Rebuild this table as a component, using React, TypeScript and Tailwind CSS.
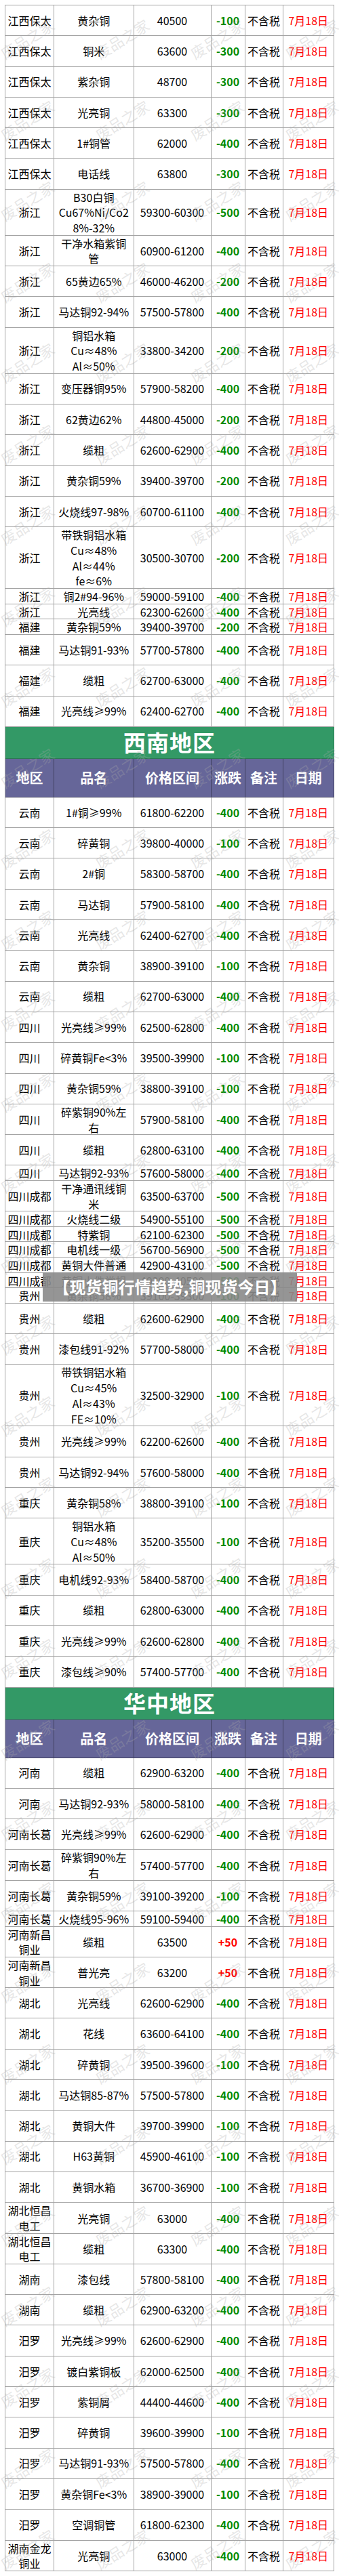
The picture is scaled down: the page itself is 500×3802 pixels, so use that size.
import React from "react"

type Row =
    | { kind: "title"; text: string }
    | { kind: "head" }
    | { kind: "row"; region: string; product: string; price: string; change: string; h: "n" | "c" | "t" | "f"; banner?: boolean }

const r = (region: string, product: string, price: string, change: string, h: "n" | "c" | "t" | "f" = "n", banner = false): Row => ({
    kind: "row", region, product, price, change, h, banner,
})

const rows: Row[] = [
    r("江西保太", "黄杂铜", "40500", "-100"),
    r("江西保太", "铜米", "63600", "-300"),
    r("江西保太", "紫杂铜", "48700", "-300"),
    r("江西保太", "光亮铜", "63300", "-300"),
    r("江西保太", "1#铜管", "62000", "-400"),
    r("江西保太", "电话线", "63800", "-300"),
    r("浙江", "B30白铜\nCu67%Ni/Co2\n8%-32%", "59300-60300", "-500", "t"),
    r("浙江", "干净水箱紫铜\n管", "60900-61200", "-400"),
    r("浙江", "65黄边65%", "46000-46200", "-200"),
    r("浙江", "马达铜92-94%", "57500-57800", "-400"),
    r("浙江", "铜铝水箱\nCu≈48%\nAl≈50%", "33800-34200", "-200", "t"),
    r("浙江", "变压器铜95%", "57900-58200", "-400"),
    r("浙江", "62黄边62%", "44800-45000", "-200"),
    r("浙江", "缆粗", "62600-62900", "-400"),
    r("浙江", "黄杂铜59%", "39400-39700", "-200"),
    r("浙江", "火烧线97-98%", "60700-61100", "-400"),
    r("浙江", "带铁铜铝水箱\nCu≈48%\nAl≈44%\nfe≈6%", "30500-30700", "-200", "f"),
    r("浙江", "铜2#94-96%", "59000-59100", "-400", "c"),
    r("浙江", "光亮线", "62300-62600", "-400", "c"),
    r("福建", "黄杂铜59%", "39400-39700", "-200", "c"),
    r("福建", "马达铜91-93%", "57700-57800", "-400"),
    r("福建", "缆粗", "62700-63000", "-400"),
    r("福建", "光亮线≥99%", "62400-62700", "-400"),
    { kind: "title", text: "西南地区" },
    { kind: "head" },
    r("云南", "1#铜≥99%", "61800-62200", "-400"),
    r("云南", "碎黄铜", "39800-40000", "-100"),
    r("云南", "2#铜", "58300-58700", "-400"),
    r("云南", "马达铜", "57900-58100", "-400"),
    r("云南", "光亮线", "62400-62700", "-400"),
    r("云南", "黄杂铜", "38900-39100", "-100"),
    r("云南", "缆粗", "62700-63000", "-400"),
    r("四川", "光亮线≥99%", "62500-62800", "-400"),
    r("四川", "碎黄铜Fe<3%", "39500-39900", "-100"),
    r("四川", "黄杂铜59%", "38800-39100", "-100"),
    r("四川", "碎紫铜90%左\n右", "57900-58100", "-400"),
    r("四川", "缆粗", "62800-63100", "-400"),
    r("四川", "马达铜92-93%", "57600-58000", "-400", "c"),
    r("四川成都", "干净通讯线铜\n米", "63500-63700", "-500"),
    r("四川成都", "火烧线二级", "54900-55100", "-500", "c"),
    r("四川成都", "特紫铜", "62100-62300", "-500", "c"),
    r("四川成都", "电机线一级", "56700-56900", "-500", "c"),
    r("四川成都", "黄铜大件普通", "42900-43100", "-500", "c"),
    r("四川成都", "黄铜小件常规", "40300-40500", "-500", "c", true),
    r("贵州", "黄杂铜58%", "39100-39300", "-100", "c"),
    r("贵州", "缆粗", "62600-62900", "-400"),
    r("贵州", "漆包线91-92%", "57700-58000", "-400"),
    r("贵州", "带铁铜铝水箱\nCu≈45%\nAl≈43%\nFE≈10%", "32500-32900", "-100", "f"),
    r("贵州", "光亮线≥99%", "62200-62600", "-400"),
    r("贵州", "马达铜92-94%", "57600-58000", "-400"),
    r("重庆", "黄杂铜58%", "38800-39100", "-100"),
    r("重庆", "铜铝水箱\nCu≈48%\nAl≈50%", "35200-35500", "-100", "t"),
    r("重庆", "电机线92-93%", "58400-58700", "-400"),
    r("重庆", "缆粗", "62800-63000", "-400"),
    r("重庆", "光亮线≥99%", "62600-62800", "-400"),
    r("重庆", "漆包线≥90%", "57400-57700", "-400"),
    { kind: "title", text: "华中地区" },
    { kind: "head" },
    r("河南", "缆粗", "62900-63200", "-400"),
    r("河南", "马达铜92-93%", "58000-58100", "-400"),
    r("河南长葛", "光亮线≥99%", "62600-62900", "-400"),
    r("河南长葛", "碎紫铜90%左\n右", "57400-57700", "-400"),
    r("河南长葛", "黄杂铜59%", "39100-39200", "-100"),
    r("河南长葛", "火烧线95-96%", "59100-59400", "-400", "c"),
    r("河南新昌\n铜业", "缆粗", "63500", "+50"),
    r("河南新昌\n铜业", "普光亮", "63200", "+50"),
    r("湖北", "光亮线", "62600-62900", "-400"),
    r("湖北", "花线", "63600-64100", "-400"),
    r("湖北", "碎黄铜", "39500-39600", "-100"),
    r("湖北", "马达铜85-87%", "57500-57800", "-400"),
    r("湖北", "黄铜大件", "39700-39900", "-100"),
    r("湖北", "H63黄铜", "45900-46100", "-100"),
    r("湖北", "黄铜水箱", "36700-36900", "-100"),
    r("湖北恒昌\n电工", "光亮铜", "63000", "-400"),
    r("湖北恒昌\n电工", "缆粗", "63300", "-400"),
    r("湖南", "漆包线", "57800-58100", "-400"),
    r("湖南", "缆粗", "62900-63200", "-400"),
    r("汨罗", "光亮线≥99%", "62600-62900", "-400"),
    r("汨罗", "镀白紫铜板", "62000-62500", "-400"),
    r("汨罗", "紫铜屑", "44400-44600", "-400"),
    r("汨罗", "碎黄铜", "39600-39900", "-100"),
    r("汨罗", "马达铜91-93%", "57500-57800", "-400"),
    r("汨罗", "黄杂铜Fe<3%", "38900-39000", "-100"),
    r("汨罗", "空调铜管", "61800-62300", "-400"),
    r("湖南金龙\n铜业", "光亮铜", "63000", "-400"),
]

const heights = {
    n: "h-[45.3px]",
    c: "h-[22.6px]",
    t: "h-[68px]",
    f: "h-[91px]",
}

const grid = "grid grid-cols-[72px_117.5px_114px_50px_56px_75.5px] border-b border-[#a3a3a3]"
const cell = "flex items-center justify-center text-center border-r border-[#a3a3a3] whitespace-pre-line leading-[22.7px]"

function DataRow({ row }: { row: Extract<Row, { kind: "row" }> }) {
    const up = row.change.startsWith("+")
    return (
        <div className={`${grid} ${heights[row.h]} relative`}>
            <div className={cell}>{row.region}</div>
            <div className={`${cell} whitespace-pre`}>{row.product}</div>
            <div className={cell}>{row.price}</div>
            <div className={`${cell} font-bold ${up ? "text-[#ff0000]" : "text-[#008a00]"}`}>{row.change}</div>
            <div className={cell}>不含税</div>
            <div className={`${cell} text-[#ff0000]`}>7月18日</div>
            {row.banner && (
                <div className="absolute left-[55px] top-[-1px] w-[375px] h-[43px] bg-[#8a8a8a]/90 flex items-center justify-center text-white font-bold text-[24px] whitespace-nowrap z-20">
                    【现货铜行情趋势,铜现货今日】
                </div>
            )}
        </div>
    )
}

function HeadRow() {
    const h = "flex items-center justify-center border-r border-[#3f3f5f] text-white font-bold text-[20px]"
    return (
        <div className="grid grid-cols-[72px_117.5px_114px_50px_56px_75.5px] h-[57px] bg-[#666699] border-b border-[#3f3f5f]">
            <div className={h}>地区</div>
            <div className={h}>品名</div>
            <div className={h}>价格区间</div>
            <div className={h}>涨跌</div>
            <div className={h}>备注</div>
            <div className={h}>日期</div>
        </div>
    )
}

function TitleRow({ text }: { text: string }) {
    return (
        <div className="h-[47px] bg-[#339966] border-r border-b border-[#2a7a52] flex items-center justify-center text-white font-bold text-[33px] tracking-[1px]">
            {text}
        </div>
    )
}

// faint diagonal watermark, repeated
const marks: { x: number; y: number }[] = []
for (let j = 0; j < 32; j++) {
    for (let i = 0; i < 4; i++) {
        marks.push({ x: 40 + i * 140, y: 57 + j * 119.5 })
    }
}

export default function App() {
    return (
        <div className="relative w-[500px] h-[3802px] bg-white pt-[7px] pl-[7px] overflow-hidden font-['Noto_Sans_CJK_SC','Noto_Sans',sans-serif] text-[16px] text-black">
            <div className="w-[486px] border-l border-t border-[#a3a3a3]">
                {rows.map((row, i) =>
                    row.kind === "title" ? (
                        <TitleRow key={i} text={row.text} />
                    ) : row.kind === "head" ? (
                        <HeadRow key={i} />
                    ) : (
                        <DataRow key={i} row={row} />
                    )
                )}
            </div>
            <div className="absolute inset-0 pointer-events-none z-10">
                {marks.map((m, i) => (
                    <span
                        key={i}
                        className="absolute text-[22px] text-[rgba(170,170,170,0.3)] whitespace-nowrap -rotate-[32deg] -translate-x-1/2 -translate-y-1/2"
                        style={{ left: m.x, top: m.y }}
                    >
                        废品之家
                    </span>
                ))}
            </div>
        </div>
    )
}
